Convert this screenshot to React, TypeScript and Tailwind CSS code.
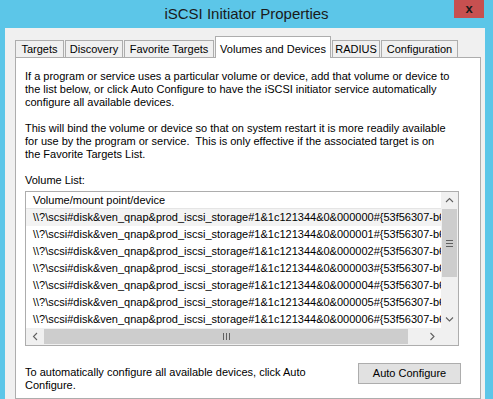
import React from "react";

const tabs = [
  { label: "Targets", w: "w-[49px]" },
  { label: "Discovery", w: "w-[58px]" },
  { label: "Favorite Targets", w: "w-[90px]" },
  { label: "Volumes and Devices", w: "w-[116px]", active: true },
  { label: "RADIUS", w: "w-[48px]" },
  { label: "Configuration", w: "w-[77px]" },
];

const rows = ["0", "1", "2", "3", "4", "5", "6"].map(
  (n) => `\\\\?\\scsi#disk&ven_qnap&prod_iscsi_storage#1&1c121344&0&00000${n}#{53f56307-b6`
);

function Chevron({ dir }: { dir: "up" | "down" | "left" | "right" }) {
  const d = {
    up: "M1 5 L4.5 1.5 L8 5",
    down: "M1 1.5 L4.5 5 L8 1.5",
    left: "M5 1 L1.5 4.5 L5 8",
    right: "M1.5 1 L5 4.5 L1.5 8",
  }[dir];
  const horiz = dir === "left" || dir === "right";
  return (
    <svg width={horiz ? 7 : 9} height={horiz ? 9 : 7} viewBox={horiz ? "0 0 7 9" : "0 0 9 7"}>
      <path d={d} fill="none" stroke="#606060" strokeWidth="1.1" />
    </svg>
  );
}

export default function App() {
  return (
    <div className="w-[493px] h-[399px] bg-[#5cc6e8] flex flex-col overflow-hidden text-black [font-family:'Liberation_Sans',Arial,sans-serif]">
      {/* Title bar */}
      <div className="h-[28px] shrink-0 grid grid-cols-[1fr_auto_1fr]">
        <div />
        <div className="pt-[5px] text-[15px] leading-[18px] text-[#1a1a1a]">iSCSI Initiator Properties</div>
        <div className="flex justify-end pr-[9px]">
          <div className="w-[30px] h-[18px] bg-[#c75050] flex items-center justify-center text-[13px] font-bold leading-none text-[#1a1a1a] pb-[2px]">
            x
          </div>
        </div>
      </div>

      {/* Client area */}
      <div className="flex-1 ml-[5px] mr-[8px] bg-[#f0f0f0] pt-[8px] pl-[10px] pr-[4px] flex flex-col text-[11px]">
        {/* Tabs */}
        <div className="flex items-end gap-[1px] h-[21px] relative z-10">
          {tabs.map((t) =>
            t.active ? (
              <div
                key={t.label}
                className={`${t.w} h-[22px] -mb-[1px] bg-white border border-[#adadad] border-b-0 flex items-start justify-center pt-[4px]`}
              >
                {t.label}
              </div>
            ) : (
              <div
                key={t.label}
                className={`${t.w} h-[17px] bg-[#f0f0f0] border border-[#adadad] border-b-0 flex items-center justify-center`}
              >
                {t.label}
              </div>
            )
          )}
        </div>

        {/* Panel */}
        <div className="flex-1 bg-white border border-[#adadad] pt-[12px] pl-[9px] pr-[21px] leading-[13px]">
          <p>
            If a program or service uses a particular volume or device, add that volume or device to
            <br />
            the list below, or click Auto Configure to have the iSCSI initiator service automatically
            <br />
            configure all available devices.
          </p>
          <p className="mt-[13px]">
            This will bind the volume or device so that on system restart it is more readily available
            <br />
            for use by the program or service.&nbsp; This is only effective if the associated target is on
            <br />
            the Favorite Targets List.
          </p>
          <p className="mt-[13px]">Volume List:</p>

          {/* List box */}
          <div className="mt-[4px] h-[155px] border border-[#adadad] grid grid-cols-[1fr_17px] grid-rows-[1fr_17px]">
            <div className="overflow-hidden">
              <div className="h-[17px] flex items-center pl-[7px] whitespace-nowrap border-b border-[#e5e5e5]">
                Volume/mount point/device
              </div>
              {rows.map((r, i) => (
                <div
                  key={i}
                  className={`h-[17px] flex items-center pl-[7px] whitespace-nowrap ${i === 0 ? "bg-[#f3f3f3]" : ""}`}
                >
                  {r}
                </div>
              ))}
            </div>

            {/* Vertical scrollbar */}
            <div className="bg-[#f0f0f0] flex flex-col">
              <div className="h-[17px] flex items-center justify-center">
                <Chevron dir="up" />
              </div>
              <div className="h-[68px] mx-[1px] bg-[#cdcdcd] flex items-center justify-center">
                <div className="flex flex-col gap-[2px]">
                  <div className="w-[7px] h-[1px] bg-[#606060]" />
                  <div className="w-[7px] h-[1px] bg-[#606060]" />
                  <div className="w-[7px] h-[1px] bg-[#606060]" />
                </div>
              </div>
              <div className="flex-1" />
              <div className="h-[17px] flex items-center justify-center">
                <Chevron dir="down" />
              </div>
            </div>

            {/* Horizontal scrollbar */}
            <div className="bg-[#f0f0f0] flex">
              <div className="w-[18px] flex items-center justify-center">
                <Chevron dir="left" />
              </div>
              <div className="w-[364px] my-[1px] bg-[#cdcdcd] flex items-center justify-center">
                <div className="flex gap-[2px]">
                  <div className="w-[1px] h-[7px] bg-[#606060]" />
                  <div className="w-[1px] h-[7px] bg-[#606060]" />
                  <div className="w-[1px] h-[7px] bg-[#606060]" />
                </div>
              </div>
              <div className="flex-1" />
              <div className="w-[17px] flex items-center justify-center">
                <Chevron dir="right" />
              </div>
            </div>
            <div className="bg-[#f0f0f0]" />
          </div>

          {/* Bottom row */}
          <div className="mt-[17px] flex justify-between items-start">
            <p className="pt-[3px]">
              To automatically configure all available devices, click Auto
              <br />
              Configure.
            </p>
            <button className="w-[103px] h-[21px] -mr-[2px] bg-[#e1e1e1] border border-[#adadad] text-[11px] flex items-center justify-center">
              Auto Configure
            </button>
          </div>
        </div>
      </div>
    </div>
  );
}
